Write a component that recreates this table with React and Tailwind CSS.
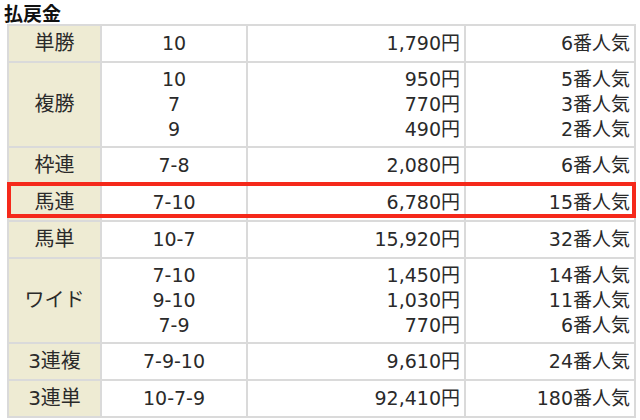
const rows = [
  { type: "単勝", nums: ["10"], pays: ["1,790円"], pops: ["6番人気"] },
  { type: "複勝", nums: ["10", "7", "9"], pays: ["950円", "770円", "490円"], pops: ["5番人気", "3番人気", "2番人気"] },
  { type: "枠連", nums: ["7-8"], pays: ["2,080円"], pops: ["6番人気"] },
  { type: "馬連", nums: ["7-10"], pays: ["6,780円"], pops: ["15番人気"] },
  { type: "馬単", nums: ["10-7"], pays: ["15,920円"], pops: ["32番人気"] },
  { type: "ワイド", nums: ["7-10", "9-10", "7-9"], pays: ["1,450円", "1,030円", "770円"], pops: ["14番人気", "11番人気", "6番人気"] },
  { type: "3連複", nums: ["7-9-10"], pays: ["9,610円"], pops: ["24番人気"] },
  { type: "3連単", nums: ["10-7-9"], pays: ["92,410円"], pops: ["180番人気"] },
];

const Lines = ({ items }) => (
  <>
    {items.map((t, i) => (
      <div key={i}>{t}</div>
    ))}
  </>
);

export default function App() {
  return (
    <div
      className="relative w-[640px] h-[420px] bg-white text-[#2a2a2a] overflow-hidden"
      style={{ fontFamily: '"DejaVu Sans", "Noto Sans CJK JP", sans-serif' }}
    >
      <h2
        className="pl-[4px] pt-[2px] h-[24px] text-[19px] leading-[22px] font-bold text-[#111]"
        style={{ fontFamily: '"Noto Sans CJK JP", sans-serif' }}
      >
        払戻金
      </h2>
      <table className="ml-[7px] border-collapse table-fixed w-[627px] text-[19px] leading-[25px]">
        <colgroup>
          <col className="w-[93px]" />
          <col className="w-[146px]" />
          <col className="w-[218px]" />
          <col className="w-[170px]" />
        </colgroup>
        <tbody>
          {rows.map((r) => {
            const h = r.nums.length > 1 ? "h-[85px]" : "h-[37px]";
            return (
              <tr key={r.type} className={h}>
                <td className="border-2 border-[#dadada] bg-[#eeebd3] text-center align-middle p-0 text-[20px]">{r.type}</td>
                <td className="border-2 border-[#dadada] text-center align-middle p-0">
                  <Lines items={r.nums} />
                </td>
                <td className="border-2 border-[#dadada] text-right align-middle pr-[4px] py-0">
                  <Lines items={r.pays} />
                </td>
                <td className="border-2 border-[#dadada] text-right align-middle pr-[4px] py-0">
                  <Lines items={r.pops} />
                </td>
              </tr>
            );
          })}
        </tbody>
      </table>
      <div className="absolute left-[7px] top-[182px] w-[629px] h-[36px] border-4 border-[#f5291b]" />
    </div>
  );
}
